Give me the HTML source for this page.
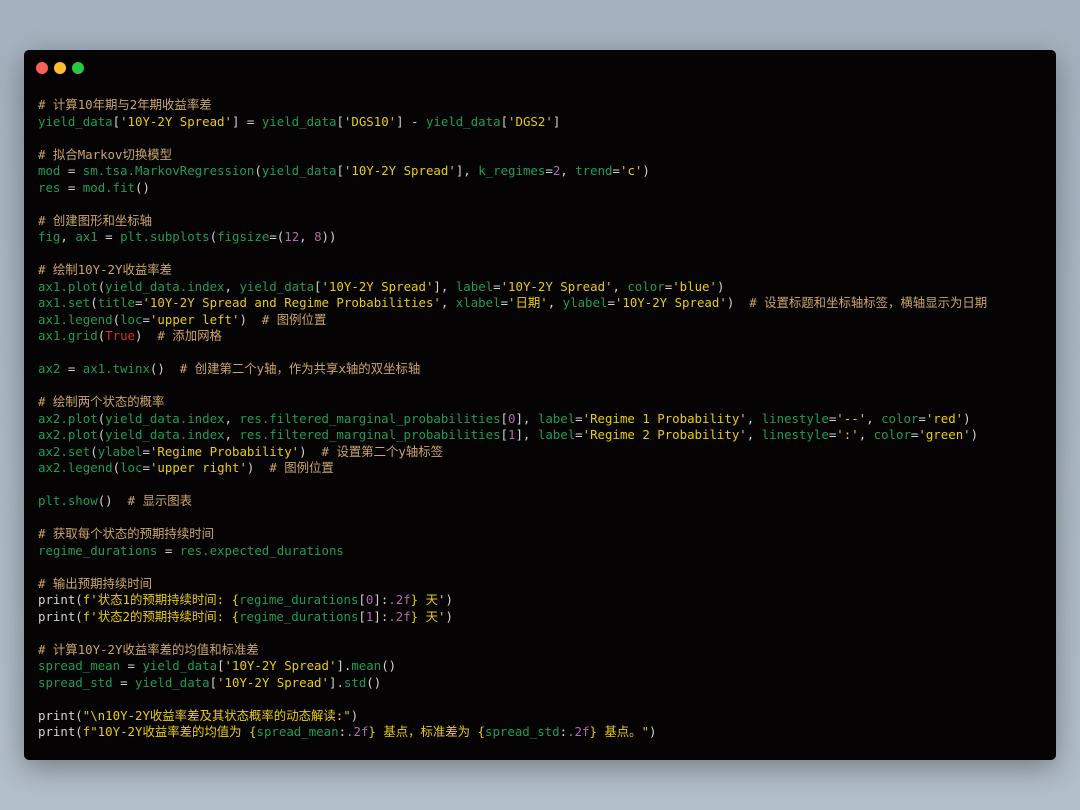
<!DOCTYPE html>
<html><head><meta charset="utf-8"><style>
html,body{margin:0;padding:0;}
body{width:1080px;height:810px;background:linear-gradient(180deg,#a4b2bf,#b3bfca);position:relative;overflow:hidden;font-family:"DejaVu Sans Mono","Noto Sans CJK SC",monospace;}
.win{position:absolute;left:24px;top:50px;width:1032px;height:710px;background:#060304;border-radius:5px;box-shadow:0 8px 30px rgba(0,0,0,.35);}
.dot{position:absolute;top:12px;width:12px;height:12px;border-radius:50%;}
pre{position:absolute;left:14px;top:47px;margin:0;font-family:"DejaVu Sans Mono","Noto Sans CJK SC",monospace;font-size:12.4px;line-height:16.5px;color:#d2d2d2;white-space:pre;}
.c{color:#c9a66b}.g{color:#1f9d55}.s{color:#e6cc12}.n{color:#b36ab0}.r{color:#d0342c}
.k{font-size:12.4px;font-family:"Noto Sans CJK SC",sans-serif;line-height:16.5px;vertical-align:top;display:inline-block;height:16.5px;position:relative;top:-1px}
</style></head><body>
<div class="win">
<div class="dot" style="left:12px;background:#fe5f57"></div>
<div class="dot" style="left:30px;background:#febc2e"></div>
<div class="dot" style="left:48px;background:#28c840"></div>
<pre id="code"><span class="c"># 计算10年期与2年期收益率差</span>
<span class="g">yield_data</span>[<span class="s">'10Y-2Y Spread'</span>] = <span class="g">yield_data</span>[<span class="s">'DGS10'</span>] - <span class="g">yield_data</span>[<span class="s">'DGS2'</span>]

<span class="c"># 拟合Markov切换模型</span>
<span class="g">mod</span> = <span class="g">sm.tsa.MarkovRegression</span>(<span class="g">yield_data</span>[<span class="s">'10Y-2Y Spread'</span>], <span class="g">k_regimes</span>=<span class="n">2</span>, <span class="g">trend</span>=<span class="s">'c'</span>)
<span class="g">res</span> = <span class="g">mod.fit</span>()

<span class="c"># 创建图形和坐标轴</span>
<span class="g">fig</span>, <span class="g">ax1</span> = <span class="g">plt.subplots</span>(<span class="g">figsize</span>=(<span class="n">12</span>, <span class="n">8</span>))

<span class="c"># 绘制10Y-2Y收益率差</span>
<span class="g">ax1.plot</span>(<span class="g">yield_data.index</span>, <span class="g">yield_data</span>[<span class="s">'10Y-2Y Spread'</span>], <span class="g">label</span>=<span class="s">'10Y-2Y Spread'</span>, <span class="g">color</span>=<span class="s">'blue'</span>)
<span class="g">ax1.set</span>(<span class="g">title</span>=<span class="s">'10Y-2Y Spread and Regime Probabilities'</span>, <span class="g">xlabel</span>=<span class="s">'日期'</span>, <span class="g">ylabel</span>=<span class="s">'10Y-2Y Spread'</span>)  <span class="c"># 设置标题和坐标轴标签，横轴显示为日期</span>
<span class="g">ax1.legend</span>(<span class="g">loc</span>=<span class="s">'upper left'</span>)  <span class="c"># 图例位置</span>
<span class="g">ax1.grid</span>(<span class="r">True</span>)  <span class="c"># 添加网格</span>

<span class="g">ax2</span> = <span class="g">ax1.twinx</span>()  <span class="c"># 创建第二个y轴，作为共享x轴的双坐标轴</span>

<span class="c"># 绘制两个状态的概率</span>
<span class="g">ax2.plot</span>(<span class="g">yield_data.index</span>, <span class="g">res.filtered_marginal_probabilities</span>[<span class="n">0</span>], <span class="g">label</span>=<span class="s">'Regime 1 Probability'</span>, <span class="g">linestyle</span>=<span class="s">'--'</span>, <span class="g">color</span>=<span class="s">'red'</span>)
<span class="g">ax2.plot</span>(<span class="g">yield_data.index</span>, <span class="g">res.filtered_marginal_probabilities</span>[<span class="n">1</span>], <span class="g">label</span>=<span class="s">'Regime 2 Probability'</span>, <span class="g">linestyle</span>=<span class="s">':'</span>, <span class="g">color</span>=<span class="s">'green'</span>)
<span class="g">ax2.set</span>(<span class="g">ylabel</span>=<span class="s">'Regime Probability'</span>)  <span class="c"># 设置第二个y轴标签</span>
<span class="g">ax2.legend</span>(<span class="g">loc</span>=<span class="s">'upper right'</span>)  <span class="c"># 图例位置</span>

<span class="g">plt.show</span>()  <span class="c"># 显示图表</span>

<span class="c"># 获取每个状态的预期持续时间</span>
<span class="g">regime_durations</span> = <span class="g">res.expected_durations</span>

<span class="c"># 输出预期持续时间</span>
print(<span class="s">f'状态1的预期持续时间: {</span><span class="g">regime_durations</span>[<span class="n">0</span>]:<span class="n">.2f</span><span class="s">} 天'</span>)
print(<span class="s">f'状态2的预期持续时间: {</span><span class="g">regime_durations</span>[<span class="n">1</span>]:<span class="n">.2f</span><span class="s">} 天'</span>)

<span class="c"># 计算10Y-2Y收益率差的均值和标准差</span>
<span class="g">spread_mean</span> = <span class="g">yield_data</span>[<span class="s">'10Y-2Y Spread'</span>].<span class="g">mean</span>()
<span class="g">spread_std</span> = <span class="g">yield_data</span>[<span class="s">'10Y-2Y Spread'</span>].<span class="g">std</span>()

print(<span class="s">"\n10Y-2Y收益率差及其状态概率的动态解读:"</span>)
print(<span class="s">f"10Y-2Y收益率差的均值为 {</span><span class="g">spread_mean</span>:<span class="n">.2f</span><span class="s">} 基点，标准差为 {</span><span class="g">spread_std</span>:<span class="n">.2f</span><span class="s">} 基点。"</span>)</pre>
</div>
<script>
(function(){var w=document.createTreeWalker(document.getElementById('code'),NodeFilter.SHOW_TEXT),ns=[],n;while(n=w.nextNode())ns.push(n);
var re=/([\u3000-\u303f\u4e00-\u9fff\uff00-\uffef]+)/;
ns.forEach(function(t){if(!re.test(t.nodeValue))return;var f=document.createDocumentFragment();t.nodeValue.split(re).forEach(function(p,i){if(!p)return;if(i%2){var s=document.createElement('span');s.className='k';s.textContent=p;f.appendChild(s);}else f.appendChild(document.createTextNode(p));});t.parentNode.replaceChild(f,t);});})();
</script>
</body></html>
